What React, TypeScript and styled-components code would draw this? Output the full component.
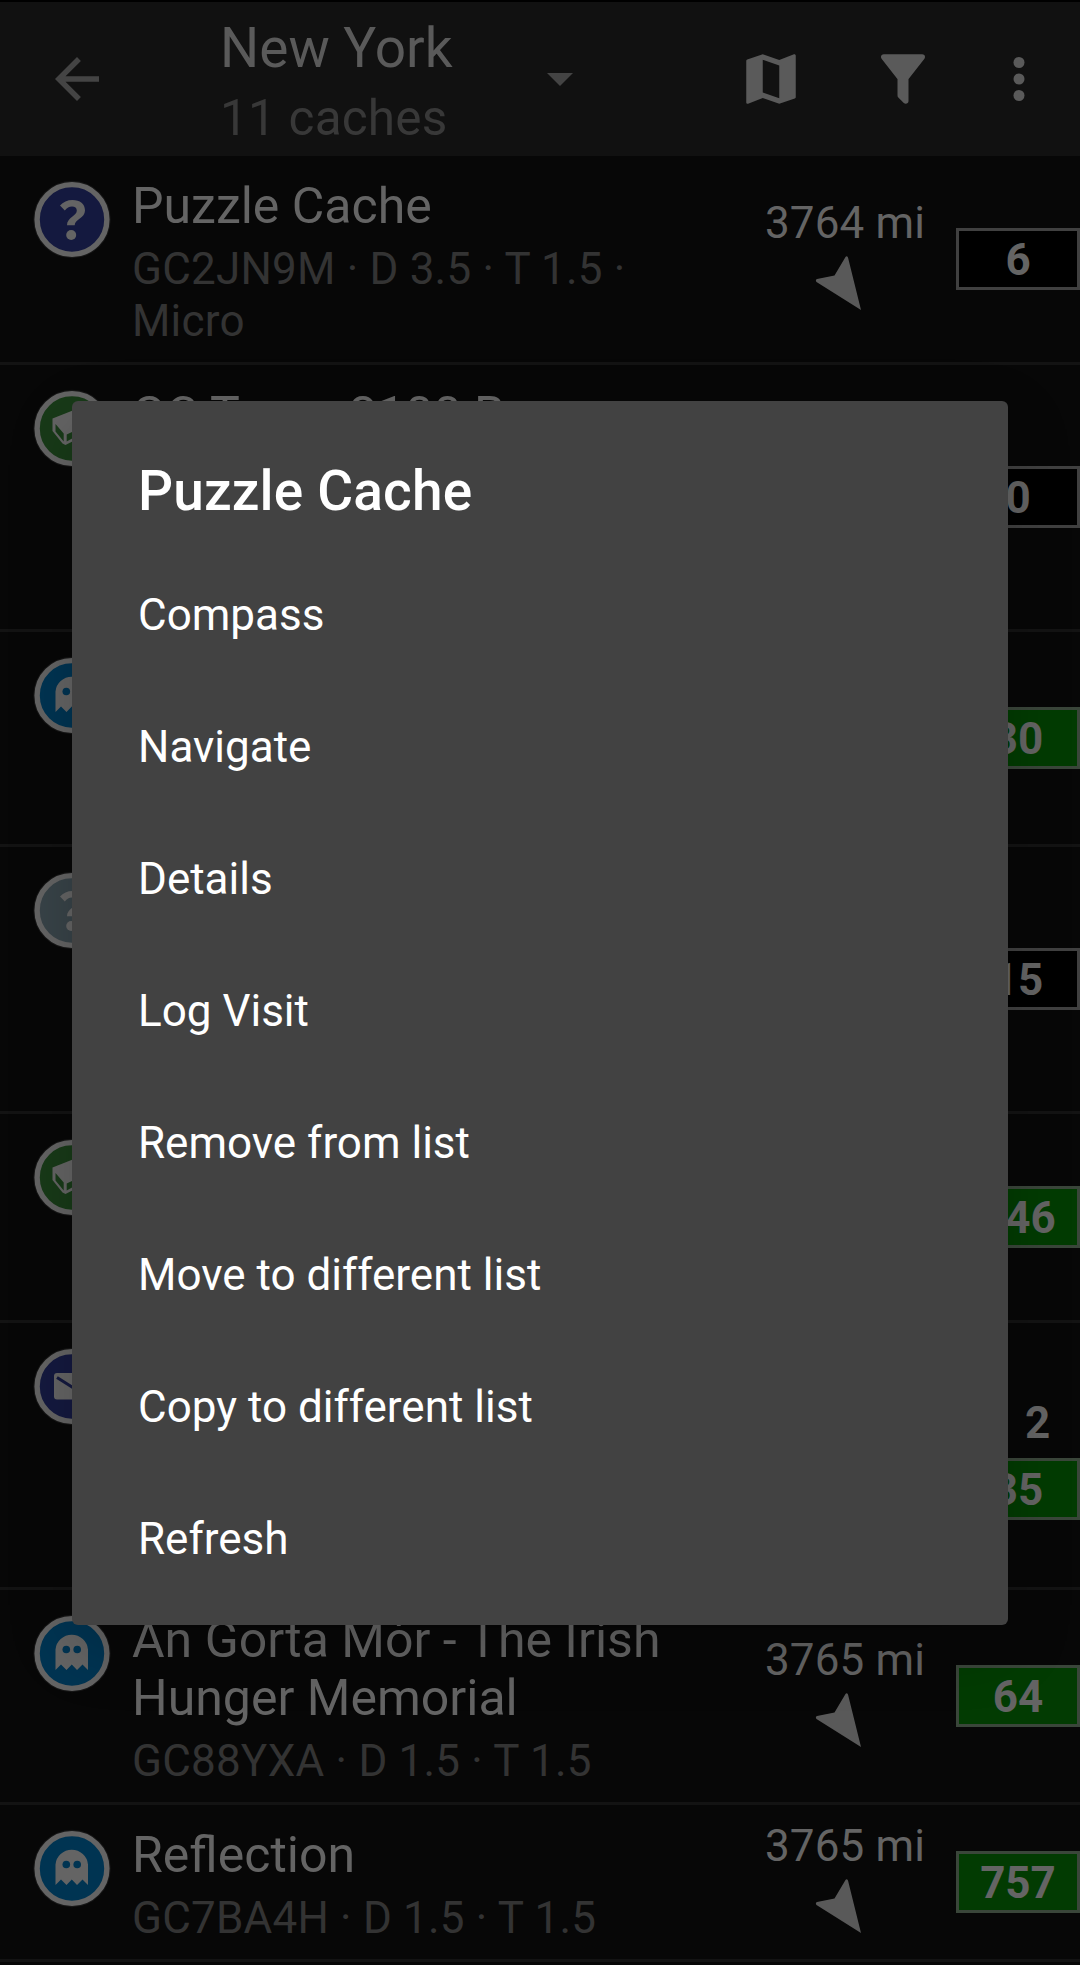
import React from "react";
import styled, { createGlobalStyle } from "styled-components";

const GlobalStyle = createGlobalStyle`
  *, *::before, *::after { box-sizing: border-box; }
  html, body { margin: 0; background: #070707; }
  body { font-family: Roboto, "Liberation Sans", sans-serif; overflow: hidden; }
  h1, h2, p, ul { margin: 0; padding: 0; font-weight: 400; list-style: none; }
  button { border: 0; padding: 0; background: none; font: inherit; color: inherit; text-align: left; }
`;

const Screen = styled.div`
  position: relative;
  width: 1080px;
  height: 1965px;
  overflow: hidden;
  background: #070707;
  color: #646464;
`;

const Toolbar = styled.header`
  display: flex;
  align-items: center;
  height: 156px;
  padding: 0 28px 0 44px;
  border-top: 2px solid #000;
  background: #111111;
`;

const IconButton = styled.button<{ $tone?: string; $gap?: number }>`
  display: flex;
  width: 66px;
  height: 66px;
  margin-left: ${(p) => p.$gap ?? 0}px;
  color: ${(p) => p.$tone ?? "#5a5a5a"};
`;

const Glyph = styled.svg`
  display: block;
  width: 66px;
  height: 66px;
  fill: currentColor;
`;

const ListPicker = styled.button`
  display: flex;
  align-items: center;
  width: 372px;
  margin-left: 110px;
`;

const PickerText = styled.div`
  flex: 1;
  padding-top: 4px;
`;

const PickerTitle = styled.h1`
  font-size: 55px;
  line-height: 64px;
  color: #5a5a5a;
`;

const PickerCount = styled.p`
  margin-top: 9px;
  margin-bottom: -1px;
  font-size: 49.5px;
  letter-spacing: 0.2px;
  line-height: 58px;
  color: #383838;
`;

const Caret = styled.span`
  margin: 0 19px 0 0;
  border: 13.75px solid transparent;
  border-top-color: #444444;
  border-bottom: 0;
`;

const Row = styled.li<{ $height: number }>`
  display: flex;
  align-items: center;
  height: ${(p) => p.$height}px;
  padding-left: 32px;
  border-bottom: 3px solid #131313;
`;

const TypeIcon = styled.svg`
  flex: none;
  align-self: flex-start;
  width: 80px;
  height: 80px;
  margin-top: 23px;
`;

const Info = styled.div`
  align-self: flex-start;
  width: 560px;
  padding-top: 21px;
  margin-left: 20px;
`;

const CacheName = styled.h2`
  font-size: 50px;
  line-height: 58px;
  white-space: pre-line;
`;

const CacheMeta = styled.p`
  margin-top: 8px;
  font-size: 44px;
  letter-spacing: 0.2px;
  line-height: 52px;
  color: #333333;
  white-space: pre-line;
`;

const Heading = styled.div`
  display: flex;
  flex-direction: column;
  align-items: center;
  width: 160px;
  margin-left: 73px;
  padding-bottom: 5px;
`;

const Distance = styled.span`
  font-size: 44px;
  letter-spacing: 0.15px;
  line-height: 52px;
  white-space: nowrap;
`;

const Arrow = styled.svg`
  display: block;
  width: 66px;
  height: 66px;
  margin: 1px 0 0 3px;
`;

const Stats = styled.div`
  width: 124px;
  margin-left: auto;
  font-size: 44px;
  font-weight: 700;
  text-align: center;
`;

const Trackables = styled.div`
  height: 68px;
  padding-left: 39px;
  line-height: 67px;
`;

const Favorites = styled.div<{ $found: boolean }>`
  height: 62px;
  border: 3px solid ${(p) => (p.$found ? "#3a463a" : "#404040")};
  background: ${(p) => (p.$found ? "#023b02" : "#000")};
  line-height: 58px;
`;

const Dialog = styled.section`
  position: absolute;
  top: 401px;
  left: 72px;
  width: 936px;
  height: 1224px;
  padding: 42px 66px 0;
  border-radius: 6px;
  background: #424242;
  color: #fff;
  box-shadow: 0 22px 66px rgba(0, 0, 0, 0.2);
`;

const DialogTitle = styled.h2`
  height: 106px;
  padding-top: 16px;
  font-size: 55px;
  font-weight: 500;
  letter-spacing: 0.15px;
  line-height: 64px;
`;

const Action = styled.button`
  display: flex;
  align-items: center;
  width: 100%;
  height: 132px;
  font-size: 44px;
`;

type Kind = "mystery" | "traditional" | "virtual" | "solved" | "letterbox";

const discColor: Record<Kind, string> = {
  mystery: "#14193f",
  traditional: "#183a18",
  virtual: "#003452",
  solved: "#384348",
  letterbox: "#14193f",
};

const Question = () => (
  <>
    <path
      d="M28 26.500C31 23 35.500 21 40.500 21C48 21 53 25 53 31.500C53 39 42.700 40.500 42.700 46.300H35C35 38.500 44.800 37 44.800 31.800C44.800 29 43 27.600 40 27.600C37 27.600 35 29 32.800 31.600Z"
      fill="#646464"
    />
    <circle cx="39.200" cy="56" r="5" fill="#646464" />
  </>
);

const Box = () => (
  <>
    <path d="M20.500 30.500L42 22L61 29V43L33.500 57L30.500 55.500L20.500 43Z" fill="#646464" />
    <path d="M23.500 36L31.700 45.500V53.500L23.500 43.500ZM34.700 46.500L57 36V41L34.700 53.500Z" fill="#183a18" />
  </>
);

const Ghost = () => (
  <>
    <path d="M23.500 57V36.500A16.300 16 0 0 1 56 36.500V57L50.500 51.500L45 57L39.800 51.500L34.500 57L29 51.500Z" fill="#646464" />
    <circle cx="34.300" cy="36.500" r="3.800" fill="#003452" />
    <circle cx="45.200" cy="36.500" r="3.800" fill="#003452" />
  </>
);

const Envelope = () => (
  <>
    <rect x="22" y="27" width="36" height="26.500" rx="3" fill="#646464" />
    <path d="M25 31.500L40 41L55 31.500" fill="none" stroke="#14193f" strokeWidth="3" />
  </>
);

const emblem: Record<Kind, React.FC> = {
  mystery: Question,
  traditional: Box,
  virtual: Ghost,
  solved: Question,
  letterbox: Envelope,
};

const CacheIcon = ({ kind }: { kind: Kind }) => {
  const Emblem = emblem[kind];
  return (
    <TypeIcon viewBox="0 0 80 80">
      <circle cx="40" cy="40.500" r="38.700" fill="#161616" />
      <circle cx="40" cy="40.500" r="34.900" fill={discColor[kind]} stroke="#646464" strokeWidth="5.400" />
      <Emblem />
    </TypeIcon>
  );
};

interface Cache {
  kind: Kind;
  height: number;
  name?: string;
  meta?: string;
  distance?: string;
  favorites: number;
  found: boolean;
  trackables?: number;
}

const caches: Cache[] = [
  { kind: "mystery", height: 209, name: "Puzzle Cache", meta: "GC2JN9M · D 3.5 · T 1.5 ·\nMicro", distance: "3764 mi", favorites: 6, found: false },
  { kind: "traditional", height: 267, name: "GC Tour - 2100 B", favorites: 0, found: false },
  { kind: "virtual", height: 215, favorites: 30, found: true },
  { kind: "solved", height: 267, favorites: 15, found: false },
  { kind: "traditional", height: 209, favorites: 146, found: true },
  { kind: "letterbox", height: 267, favorites: 35, found: true, trackables: 2 },
  { kind: "virtual", height: 215, name: "An Gorta Mór - The Irish\nHunger Memorial", meta: "GC88YXA · D 1.5 · T 1.5", distance: "3765 mi", favorites: 64, found: true },
  { kind: "virtual", height: 157, name: "Reflection", meta: "GC7BA4H · D 1.5 · T 1.5", distance: "3765 mi", favorites: 757, found: true },
];

const actions = [
  "Compass",
  "Navigate",
  "Details",
  "Log Visit",
  "Remove from list",
  "Move to different list",
  "Copy to different list",
  "Refresh",
];

const CacheRow = ({ cache }: { cache: Cache }) => (
  <Row $height={cache.height}>
    <CacheIcon kind={cache.kind} />
    <Info>
      {cache.name && <CacheName>{cache.name}</CacheName>}
      {cache.meta && <CacheMeta>{cache.meta}</CacheMeta>}
    </Info>
    {cache.distance && (
      <Heading>
        <Distance>{cache.distance}</Distance>
        <Arrow viewBox="0 0 66 66">
          <path d="M31.500 7Q32.800 5.500 34 7.500L47 60L2.500 32Q1 30 3 29L20.500 25.500Z" fill="#595959" />
        </Arrow>
      </Heading>
    )}
    <Stats>
      {cache.trackables !== undefined && <Trackables>{cache.trackables}</Trackables>}
      <Favorites $found={cache.found}>{cache.favorites}</Favorites>
    </Stats>
  </Row>
);

export default function App() {
  return (
    <Screen>
      <GlobalStyle />
      <Toolbar>
        <IconButton $tone="#444444" aria-label="Back">
          <Glyph viewBox="0 0 24 24">
            <path d="M20 11H7.830l5.590-5.590L12 4l-8 8 8 8 1.410-1.410L7.830 13H20v-2z" />
          </Glyph>
        </IconButton>
        <ListPicker>
          <PickerText>
            <PickerTitle>New York</PickerTitle>
            <PickerCount>11 caches</PickerCount>
          </PickerText>
          <Caret />
        </ListPicker>
        <IconButton $gap={146} aria-label="Map">
          <Glyph viewBox="0 0 24 24">
            <path d="M20.500 3l-.16.03L15 5.100 9 3 3.360 4.900c-.21.07-.36.25-.36.48V20.500c0 .28.22.5.5.5l.16-.03L9 18.900l6 2.100 5.640-1.900c.21-.07.36-.25.36-.48V3.500c0-.28-.22-.5-.5-.5zM15 19l-6-2.110V5l6 2.110V19z" />
          </Glyph>
        </IconButton>
        <IconButton $gap={66} aria-label="Filter">
          <Glyph viewBox="0 0 24 24">
            <path d="M14 12V19.880C14.040 20.180 13.940 20.500 13.710 20.710C13.320 21.100 12.690 21.100 12.300 20.710L10.290 18.700C10.060 18.470 9.960 18.160 10 17.870V12H9.970L4.210 4.620C3.870 4.190 3.950 3.560 4.380 3.220C4.570 3.080 4.780 3 5 3H19C19.220 3 19.430 3.080 19.620 3.220C20.050 3.560 20.130 4.190 19.790 4.620L14.030 12H14Z" />
          </Glyph>
        </IconButton>
        <IconButton $gap={50} aria-label="More options">
          <Glyph viewBox="0 0 24 24">
            <circle cx="12" cy="6" r="2" />
            <circle cx="12" cy="12" r="2" />
            <circle cx="12" cy="18" r="2" />
          </Glyph>
        </IconButton>
      </Toolbar>
      <ul>
        {caches.map((cache, i) => (
          <CacheRow key={i} cache={cache} />
        ))}
      </ul>
      <Dialog role="dialog" aria-label="Puzzle Cache">
        <DialogTitle>Puzzle Cache</DialogTitle>
        {actions.map((label) => (
          <Action key={label}>{label}</Action>
        ))}
      </Dialog>
    </Screen>
  );
}
